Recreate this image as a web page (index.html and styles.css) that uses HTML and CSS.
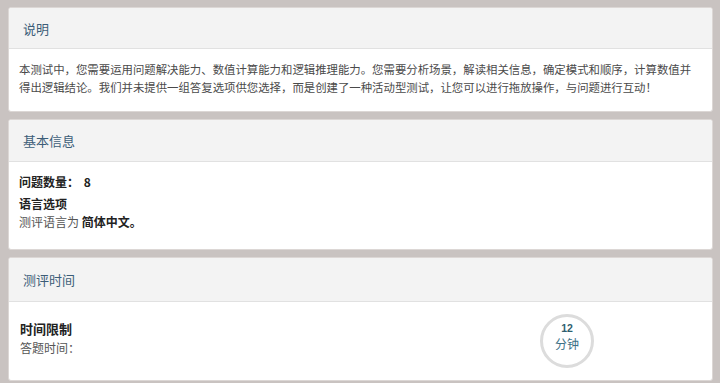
FILE: index.html
```html
<!DOCTYPE html>
<html lang="zh-CN">
<head>
<meta charset="utf-8">
<title>测评说明</title>
<link rel="stylesheet" href="styles.css">
</head>
<body>
<div class="page">
  <section class="panel">
    <div class="panel-heading"><h2 class="panel-title">说明</h2></div>
    <div class="panel-body intro">
      <p>本测试中，您需要运用问题解决能力、数值计算能力和逻辑推理能力。您需要分析场景，解读相关信息，确定模式和顺序，计算数值并得出逻辑结论。我们并未提供一组答复选项供您选择，而是创建了一种活动型测试，让您可以进行拖放操作，与问题进行互动！</p>
    </div>
  </section>

  <section class="panel">
    <div class="panel-heading mid"><h2 class="panel-title">基本信息</h2></div>
    <div class="panel-body info">
      <p class="count"><strong>问题数量：</strong> <strong class="num">8</strong></p>
      <p class="lang"><strong>语言选项</strong><br>测评语言为 <strong>简体中文。</strong></p>
    </div>
  </section>

  <section class="panel">
    <div class="panel-heading tall"><h2 class="panel-title">测评时间</h2></div>
    <div class="panel-body time">
      <div class="time-text">
        <h3 class="time-title">时间限制</h3>
        <p>答题时间：</p>
      </div>
      <div class="clock">
        <span class="clock-num">12</span>
        <span class="clock-unit">分钟</span>
      </div>
    </div>
  </section>
</div>
</body>
</html>
```

FILE: styles.css
```css
* { box-sizing: border-box; }
html, body {
  margin: 0;
  padding: 0;
  background: #c9c3c1;
  font-family: "Noto Sans CJK SC", "Liberation Sans", sans-serif;
  color: #333;
}
.page {
  padding: 7px 7px 0 8px;
  display: flex;
  flex-direction: column;
  gap: 7px;
}
.panel {
  background: #fff;
  border: 1px solid #dcd7d5;
  border-radius: 3px;
  overflow: hidden;
}
.panel-heading {
  background: #f3f3f3;
  border-bottom: 1px solid #e1e1e1;
  height: 41px;
  padding: 0 14px;
  display: flex;
  align-items: center;
}
.panel-heading.mid { height: 42px; }
.panel-heading.tall { height: 44px; }
.panel-title {
  margin: 0;
  font-size: 13px;
  font-weight: normal;
  color: #3c5d78;
  line-height: 1;
}
.panel-body {
  padding: 11px 10px 15px;
  font-size: 12px;
  line-height: 18px;
}
.panel-body p { margin: 0; }
.intro { font-size: 11.4px; }
.intro p { color: #4a4a4a; }
.info { padding-bottom: 18px; }
.info .count { margin-bottom: 4px; }
.info strong { font-weight: bold; color: #222; }
.info .num { margin-left: 2px; }
.lang { color: #555; }
.time {
  display: flex;
  align-items: center;
  padding: 12px 0 12px 11px;
}
.time-text { flex: 1; padding-bottom: 6px; }
.time-title {
  margin: 0;
  font-size: 13px;
  line-height: 20px;
  color: #222;
}
.time-text p { color: #555; }
.clock {
  width: 54px;
  height: 54px;
  border: 3px solid #dcdcdc;
  border-radius: 50%;
  margin-right: 118px;
  padding-bottom: 8px;
  display: flex;
  flex-direction: column;
  align-items: center;
  justify-content: center;
  color: #3d7186;
}
.clock-num {
  font-family: "Liberation Sans", sans-serif;
  font-weight: bold;
  font-size: 10.5px;
  line-height: 13px;
  color: #2f5f70;
}
.clock-unit { font-size: 12px; line-height: 18px; }
```
